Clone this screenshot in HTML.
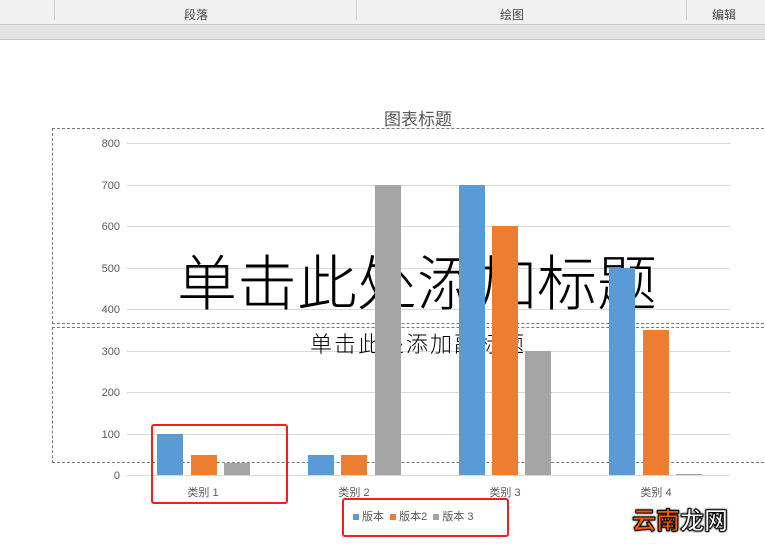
<!DOCTYPE html><html><head><meta charset="utf-8"><style>
body{margin:0;width:765px;height:544px;overflow:hidden;background:#fff;font-family:"Liberation Sans","Noto Sans CJK SC",sans-serif;position:relative}
.a{position:absolute}
.gl{position:absolute;left:127px;width:603px;height:1px;background:#d9d9d9}
.yl{position:absolute;left:80px;width:40px;text-align:right;font-size:11px;color:#595959}
.b{position:absolute;width:26px}
.c1{background:#5b9bd5}.c2{background:#ed7d31}.c3{background:#a5a5a5}
.xl{position:absolute;font-size:11px;color:#595959;width:80px;text-align:center;top:484px}
.dash{position:absolute;border:1px dashed #777}
.red{position:absolute;border:2px solid #f0201c;border-radius:3px}
</style></head><body>
<div class="a" style="left:0;top:0;width:765px;height:24px;background:#f1f1f1;border-bottom:1px solid #c8c8c8"></div>
<div class="a" style="left:54px;top:0;width:1px;height:20px;background:#d0d0d0"></div>
<div class="a" style="left:356px;top:0;width:1px;height:20px;background:#d0d0d0"></div>
<div class="a" style="left:686px;top:0;width:1px;height:20px;background:#d0d0d0"></div>
<div class="a" style="left:184px;top:6px;font-size:12px;color:#444">段落</div>
<div class="a" style="left:500px;top:6px;font-size:12px;color:#444">绘图</div>
<div class="a" style="left:712px;top:6px;font-size:12px;color:#444">编辑</div>
<div class="a" style="left:0;top:25px;width:765px;height:14px;background:#e3e3e3;border-bottom:1px solid #c4c4c4"></div>
<div class="a" style="left:0;top:105px;text-align:center;font-size:17px;color:#595959;padding-left:71px;box-sizing:border-box;width:765px">图表标题</div>
<div class="gl" style="top:143px"></div><div class="gl" style="top:185px"></div><div class="gl" style="top:226px"></div><div class="gl" style="top:268px"></div><div class="gl" style="top:309px"></div><div class="gl" style="top:351px"></div><div class="gl" style="top:392px"></div><div class="gl" style="top:434px"></div><div class="gl" style="top:475px"></div>
<div class="yl" style="top:138px">800</div><div class="yl" style="top:180px">700</div><div class="yl" style="top:221px">600</div><div class="yl" style="top:263px">500</div><div class="yl" style="top:304px">400</div><div class="yl" style="top:346px">300</div><div class="yl" style="top:387px">200</div><div class="yl" style="top:429px">100</div><div class="yl" style="top:470px">0</div>
<div class="a" style="left:177px;top:236px;font-size:60px;font-weight:300;color:#000;white-space:nowrap;letter-spacing:0px">单击此处添加标题</div>
<div class="a" style="left:310px;top:327px;font-size:22px;font-weight:300;color:#000;white-space:nowrap;letter-spacing:2px">单击此处添加副标题</div>
<div class="dash" style="left:52px;top:128px;width:720px;height:194px"></div>
<div class="dash" style="left:52px;top:327px;width:720px;height:134px"></div>
<div class="b c1" style="left:157px;top:434px;height:41px"></div><div class="b c2" style="left:191px;top:455px;height:20px"></div><div class="b c3" style="left:224px;top:463px;height:12px"></div>
<div class="b c1" style="left:308px;top:455px;height:20px"></div><div class="b c2" style="left:341px;top:455px;height:20px"></div><div class="b c3" style="left:375px;top:185px;height:290px"></div>
<div class="b c1" style="left:459px;top:185px;height:290px"></div><div class="b c2" style="left:492px;top:226px;height:249px"></div><div class="b c3" style="left:525px;top:351px;height:124px"></div>
<div class="b c1" style="left:609px;top:268px;height:207px"></div><div class="b c2" style="left:643px;top:330px;height:145px"></div><div class="b c3" style="left:676px;top:474px;height:1px"></div>
<div class="xl" style="left:163px">类别 1</div><div class="xl" style="left:314px">类别 2</div><div class="xl" style="left:465px">类别 3</div><div class="xl" style="left:616px">类别 4</div>
<div class="a" style="left:353px;top:508px;font-size:11px;color:#595959;white-space:nowrap"><span style="display:inline-block;width:6px;height:6px;background:#5b9bd5;margin-right:3px"></span>版本 &nbsp;<span style="display:inline-block;width:6px;height:6px;background:#ed7d31;margin-right:3px"></span>版本2 &nbsp;<span style="display:inline-block;width:6px;height:6px;background:#a5a5a5;margin-right:3px"></span>版本 3</div>
<div class="red" style="left:151px;top:424px;width:133px;height:76px"></div>
<div class="red" style="left:342px;top:498px;width:163px;height:35px"></div>
<div class="a" style="left:632px;top:501px;font-size:24px;font-weight:bold;white-space:nowrap;-webkit-text-stroke:1px #000;text-shadow:0 0 2px #000,0 0 2px #000"><span style="color:#ff5a00">云南</span><span style="color:#fff">龙网</span></div>
</body></html>
